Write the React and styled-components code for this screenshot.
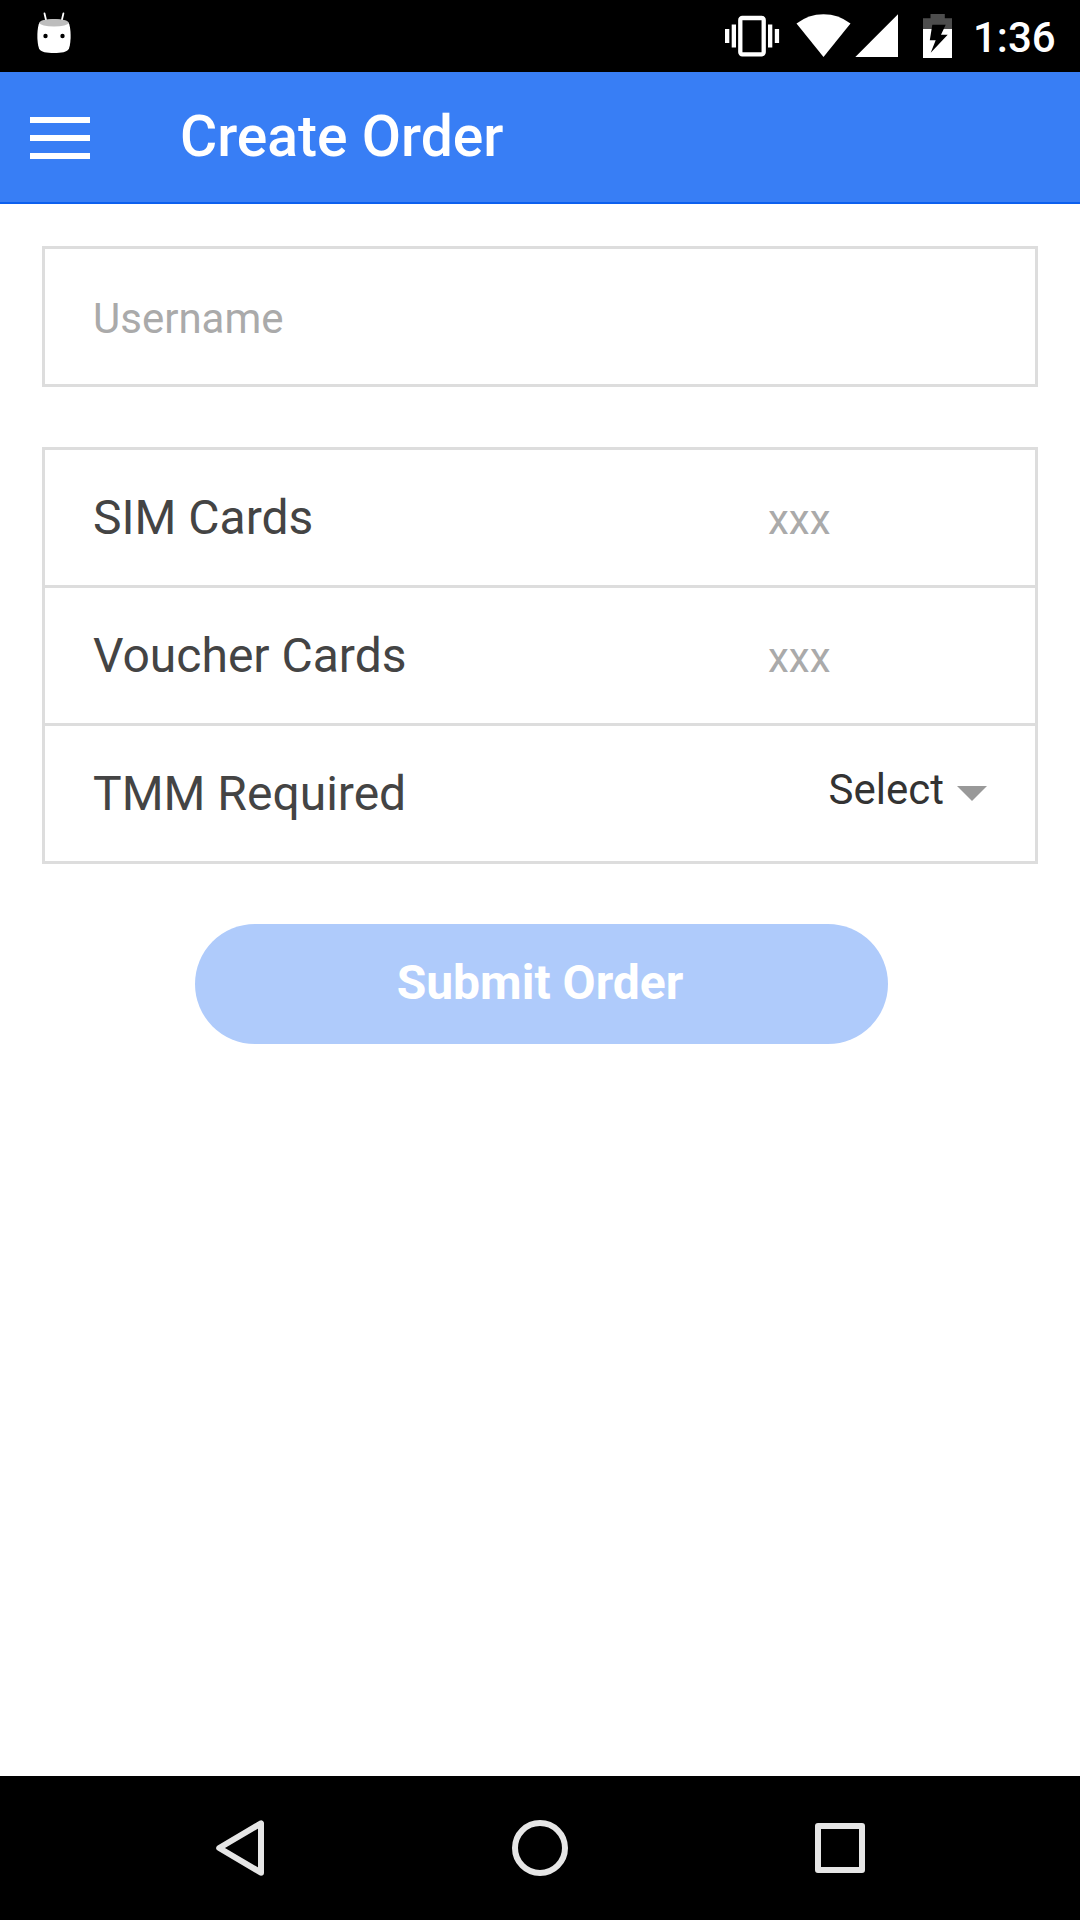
import { useState } from "react";
import styled, { createGlobalStyle } from "styled-components";

export default function App() {
    const [username, setUsername] = useState("");
    const [simCards, setSimCards] = useState("");
    const [voucherCards, setVoucherCards] = useState("");

    return (
        <>
            <GlobalStyle />
            <StyledScreen>
                <StatusBar />

                <StyledHeader>
                    <StyledMenuButton aria-label="Menu">
                        <span />
                        <span />
                        <span />
                    </StyledMenuButton>
                    <h1>Create Order</h1>
                </StyledHeader>

                <StyledForm>
                    <StyledUsername
                        type="text"
                        placeholder="Username"
                        value={username}
                        onChange={(e) => setUsername(e.target.value)}
                    />

                    <StyledList>
                        <StyledRow>
                            <StyledLabel>SIM Cards</StyledLabel>
                            <StyledQuantity
                                placeholder="xxx"
                                value={simCards}
                                onChange={(e) => setSimCards(e.target.value)}
                            />
                        </StyledRow>
                        <StyledRow>
                            <StyledLabel>Voucher Cards</StyledLabel>
                            <StyledQuantity
                                placeholder="xxx"
                                value={voucherCards}
                                onChange={(e) => setVoucherCards(e.target.value)}
                            />
                        </StyledRow>
                        <StyledRow $top>
                            <StyledLabel>TMM Required</StyledLabel>
                            <StyledSelect type="button">
                                Select
                                <StyledCaret />
                            </StyledSelect>
                        </StyledRow>
                    </StyledList>

                    <StyledSubmit type="button" disabled>Submit Order</StyledSubmit>
                </StyledForm>

                <NavigationBar />
            </StyledScreen>
        </>
    )
};

function StatusBar() {
    return (
        <StyledStatusBar>
            <svg width="36" height="42" viewBox="36 12 36 42">
                <path d="M44.5 13.5L46.5 22M63.4 13.5L61.4 22" stroke="#fff" strokeWidth="1.8" strokeLinecap="round" />
                <path d="M39.5 22.5Q54 15.5 68.5 22.5C71 27 71.5 41 69 48.5C67.5 52.2 61 53 54 53S40.5 52.2 39 48.5C36.5 41 37 27 39.5 22.5Z" fill="#fff" />
                <ellipse cx="54" cy="22.8" rx="14.5" ry="3.8" fill="#bdbdbd" />
                <circle cx="45.5" cy="36" r="2.2" />
                <circle cx="62.5" cy="36" r="2.2" />
            </svg>

            <StyledIndicators>
                <svg width="230" height="46" viewBox="724 13 230 46" fill="#fff">
                    {/* vibrate */}
                    <path d="M725 29h4.3v14h-4.3zM731.7 24.500h4.3v23h-4.3zM768 24.500h4.3v23h-4.3zM774.8 29h4.3v14h-4.3z" />
                    <rect x="740.3" y="18" width="23.4" height="36.3" rx="2" fill="none" stroke="#fff" strokeWidth="4.3" />
                    {/* wifi */}
                    <path d="M823.5 57L796.5 23.6Q808.5 14.3 823.5 14.3T850.5 23.6Z" />
                    {/* signal */}
                    <path d="M855.3 57H898V14.3Z" />
                    {/* battery */}
                    <path d="M923 29V18.3h7.5V14h14.3v4.3H952V29z" fill="#4d4d4d" />
                    <path d="M923 29h29v29h-29z" />
                    <path d="M932.3 24.7h13.4l-4.7 10h6.7l-17 18 5-12.4h-5.9z" fill="#000" />
                </svg>
                <StyledClock>1:36</StyledClock>
            </StyledIndicators>
        </StyledStatusBar>
    )
}

function NavigationBar() {
    return (
        <StyledNavigation>
            <svg width="60" height="60" viewBox="0 0 60 60">
                <path d="M51 5.3V54.7L9.2 30Z" />
            </svg>
            <svg width="60" height="60" viewBox="0 0 60 60">
                <circle cx="30" cy="30" r="25" />
            </svg>
            <svg width="60" height="60" viewBox="0 0 60 60">
                <rect x="8" y="8" width="44" height="44" />
            </svg>
        </StyledNavigation>
    )
}

const GlobalStyle = createGlobalStyle`
    * {
        box-sizing: border-box;
    }

    body {
        margin: 0;
        font-family: Roboto, sans-serif;
    }

    input, button {
        font-family: inherit;
        padding: 0;
        border: none;
        background: none;
    }

    input::placeholder {
        color: #AAAAAA;
        opacity: 1;
    }

    svg {
        display: block;
    }
`

const StyledScreen = styled.div`
    width: 1080px;
    height: 1920px;
    display: flex;
    flex-direction: column;
    background-color: #FFFFFF;
`

const StyledStatusBar = styled.div`
    height: 72px;
    padding: 12px 25px 0 36px;
    display: flex;
    justify-content: space-between;
    background-color: #000000;
`

const StyledIndicators = styled.div`
    display: flex;
    padding-top: 1px;
`

const StyledClock = styled.span`
    width: 82px;
    margin-left: 19px;
    color: #FFFFFF;
    font-size: 42px;
    font-weight: 500;
    line-height: 49px;
    white-space: nowrap;
`

const StyledHeader = styled.header`
    height: 132px;
    padding-left: 30px;
    display: flex;
    background-color: #387EF5;
    border-bottom: 2px solid #0C60EE;

    h1 {
        margin: 0 0 0 90px;
        color: #FFFFFF;
        font-size: 57px;
        font-weight: 500;
        line-height: 129px;
    }
`

const StyledMenuButton = styled.button`
    width: 60px;
    margin-top: 45px;
    display: flex;
    flex-direction: column;
    align-self: flex-start;
    gap: 12px;

    span {
        width: 60px;
        height: 6px;
        background-color: #FFFFFF;
    }
`

const StyledForm = styled.form`
    flex: 1;
    padding: 42px 42px 0;
    display: flex;
    flex-direction: column;
`

const StyledUsername = styled.input`
    && {
        height: 141px;
        padding: 4px 48px 0;
        border: 3px solid #DDDDDD;
        font-size: 42px;
    }
`

const StyledList = styled.div`
    margin-top: 60px;
    border: 3px solid #DDDDDD;
`

const StyledRow = styled.div`
    height: 138px;
    padding: 0 48px;
    display: flex;
    align-items: ${({ $top }) => ($top ? "flex-start" : "baseline")};
    justify-content: space-between;
    border-bottom: 3px solid #DDDDDD;

    &:last-child {
        height: 135px;
        border-bottom: none;
    }
`

const StyledLabel = styled.label`
    color: #444444;
    font-size: 48px;
    line-height: 135px;
`

const StyledQuantity = styled.input`
    width: 219px;
    font-size: 42px;
`

const StyledSelect = styled.button`
    display: flex;
    align-items: center;
    gap: 13px;
    color: #333333;
    font-size: 42px;
    line-height: 128px;
`

const StyledCaret = styled.span`
    margin-top: 7px;
    border-top: 15px solid #999999;
    border-left: 15px solid transparent;
    border-right: 15px solid transparent;
`

const StyledSubmit = styled.button`
    && {
        width: 693px;
        height: 120px;
        margin: 60px 0 0 153px;
        padding: 0 3px 3px 0;
        border-radius: 60px;
        background-color: #AFCBFB;
        color: #FFFFFF;
        font-size: 48px;
        font-weight: 700;
    }
`

const StyledNavigation = styled.nav`
    height: 144px;
    padding: 0 210px;
    display: flex;
    align-items: center;
    justify-content: space-between;
    background-color: #000000;

    svg {
        fill: none;
        stroke: #E6E6E6;
        stroke-width: 6;
        stroke-linejoin: round;
    }
`
